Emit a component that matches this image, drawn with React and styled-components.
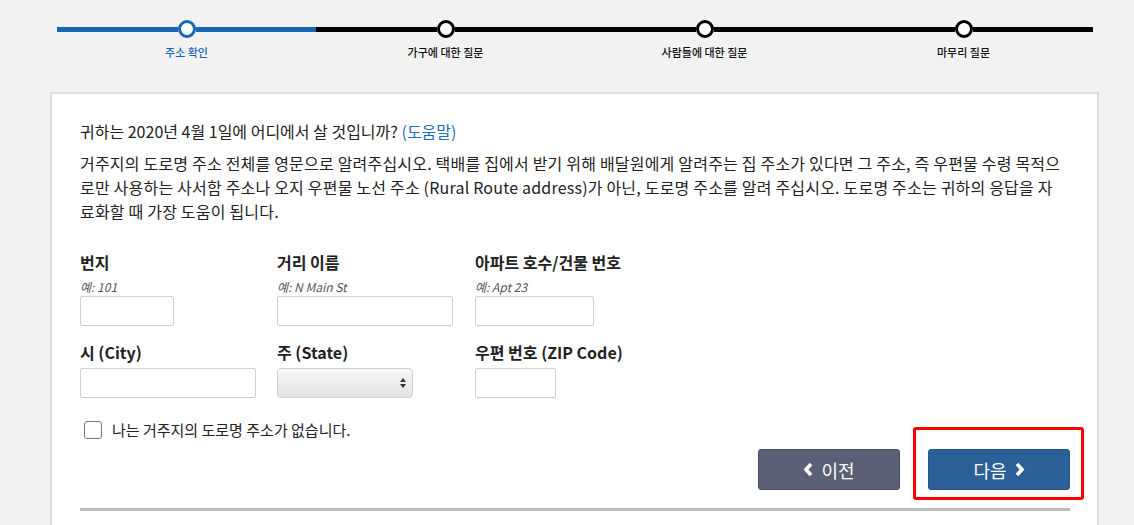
import styled, { createGlobalStyle } from 'styled-components';

const steps = ['주소 확인', '가구에 대한 질문', '사람들에 대한 질문', '마무리 질문'];

function Chevron({ dir }) {
    const points = dir === 'left' ? '8,2 3,7.5 8,13' : '3,2 8,7.5 3,13';
    return (
        <svg width="11" height="15" viewBox="0 0 11 15">
            <polyline points={points} fill="none" stroke="#fff" strokeWidth="3.6" strokeLinejoin="miter" />
        </svg>
    );
}

function App() {
    return (
        <Page>
            <GlobalStyle />
            <Stepper>
                {steps.map((label, i) => (
                    <Step key={label}>
                        <Track>
                            <Segment $active={i === 0} />
                            <Dot $active={i === 0} />
                            <Segment $active={i === 0} />
                        </Track>
                        <StepLabel $active={i === 0}>{label}</StepLabel>
                    </Step>
                ))}
            </Stepper>

            <Card>
                <Question>
                    귀하는 2020년 4월 1일에 어디에서 살 것입니까? <HelpLink>(도움말)</HelpLink>
                </Question>
                <Description>
                    거주지의 도로명 주소 전체를 영문으로 알려주십시오. 택배를 집에서 받기 위해 배달원에게 알려주는 집 주소가 있다면 그 주소, 즉 우편물 수령 목적으<br />
                    로만 사용하는 사서함 주소나 오지 우편물 노선 주소 (Rural Route address)가 아닌, 도로명 주소를 알려 주십시오. 도로명 주소는 귀하의 응답을 자<br />
                    료화할 때 가장 도움이 됩니다.
                </Description>

                <FieldGrid>
                    <Field>
                        <Label>번지</Label>
                        <Hint>예: 101</Hint>
                        <Input $w={94} />
                    </Field>
                    <Field>
                        <Label>거리 이름</Label>
                        <Hint>예: N Main St</Hint>
                        <Input $w={176} />
                    </Field>
                    <Field>
                        <Label>아파트 호수/건물 번호</Label>
                        <Hint>예: Apt 23</Hint>
                        <Input $w={119} />
                    </Field>

                    <Field>
                        <Label>시 (City)</Label>
                        <Input $w={176} />
                    </Field>
                    <Field>
                        <Label>주 (State)</Label>
                        <SelectBox>
                            <svg width="6" height="10" viewBox="0 0 6 10">
                                <path d="M3 0 L6 4 L0 4 Z M3 10 L6 6 L0 6 Z" fill="#333" />
                            </svg>
                        </SelectBox>
                    </Field>
                    <Field>
                        <Label>우편 번호 (ZIP Code)</Label>
                        <Input $w={81} />
                    </Field>
                </FieldGrid>

                <CheckRow>
                    <CheckBox />
                    <CheckText>나는 거주지의 도로명 주소가 없습니다.</CheckText>
                </CheckRow>

                <ButtonRow>
                    <NavButton $variant="prev">
                        <Chevron dir="left" /> 이전
                    </NavButton>
                    <Highlight>
                        <NavButton $variant="next">
                            다음 <Chevron dir="right" />
                        </NavButton>
                        <RedBox />
                    </Highlight>
                </ButtonRow>

                <Divider />
            </Card>
        </Page>
    );
}

const GlobalStyle = createGlobalStyle`
body {
    margin: 0;
    background: #f2f2f2;
    font-family: "Noto Sans CJK KR", "Noto Sans", sans-serif;
    color: #222;
}
`
const Page = styled.div`
width: 1134px;
height: 525px;
overflow: hidden;
`
const Stepper = styled.div`
display: grid;
grid-template-columns: repeat(4, 259px);
margin-left: 57px;
padding-top: 20px;
`
const Step = styled.div`
display: flex;
flex-direction: column;
align-items: center;
`
const Track = styled.div`
display: flex;
align-items: center;
width: 100%;
height: 18px;
`
const Segment = styled.div`
flex: 1;
height: 5px;
background: ${p => p.$active ? '#1667b3' : '#000'};
`
const Dot = styled.div`
width: 12px;
height: 12px;
border-radius: 50%;
background: #fff;
border: 3px solid ${p => p.$active ? '#1667b3' : '#000'};
`
const StepLabel = styled.div`
margin-top: 6px;
font-size: 11px;
line-height: 16px;
font-weight: 500;
color: ${p => p.$active ? '#1667b3' : '#111'};
`
const Card = styled.div`
margin: 32px 35px 0 50px;
background: #fff;
border: 2px solid #dcdcdc;
padding: 25px 27px 40px 28px;
`
const Question = styled.div`
font-size: 16px;
line-height: 24px;
color: #222;
`
const HelpLink = styled.a`
color: #1b6fbf;
`
const Description = styled.p`
margin: 8px 0 0;
font-size: 16px;
line-height: 24px;
letter-spacing: 0.2px;
white-space: nowrap;
color: #222;
`
const FieldGrid = styled.div`
display: grid;
grid-template-columns: 197px 198px auto;
margin-top: 29px;
row-gap: 16px;
`
const Field = styled.div`
display: flex;
flex-direction: column;
align-items: flex-start;
`
const Label = styled.div`
font-size: 16px;
font-weight: 700;
line-height: 20px;
margin-bottom: 6px;
color: #222;
`
const Hint = styled.div`
font-size: 12px;
font-style: italic;
line-height: 18px;
color: #555;
`
const Input = styled.input`
box-sizing: border-box;
width: ${p => p.$w}px;
height: 30px;
border: 1px solid #cfcfcf;
border-radius: 2px;
background: #fff;
`
const SelectBox = styled.div`
box-sizing: border-box;
width: 136px;
height: 30px;
border: 1px solid #cfcfcf;
border-radius: 4px;
background: linear-gradient(#f8f8f8, #e2e2e2);
display: flex;
align-items: center;
justify-content: flex-end;
padding-right: 6px;
`
const CheckRow = styled.div`
display: flex;
align-items: center;
gap: 10px;
margin: 22px 0 0 4px;
`
const CheckBox = styled.div`
width: 16px;
height: 16px;
border: 1px solid #777;
border-radius: 3px;
background: #fff;
`
const CheckText = styled.span`
font-size: 15px;
line-height: 20px;
color: #222;
`
const ButtonRow = styled.div`
display: flex;
justify-content: flex-end;
gap: 28px;
margin-top: 9px;
`
const NavButton = styled.button`
box-sizing: border-box;
width: 142px;
height: 41px;
display: flex;
align-items: center;
justify-content: center;
gap: 7px;
border-radius: 3px;
font-family: "Noto Sans CJK KR", sans-serif;
font-size: 18px;
color: #fff;
background: ${p => p.$variant === 'prev' ? '#5b6076' : '#2a5f97'};
border: 1px solid ${p => p.$variant === 'prev' ? '#4a4e60' : '#24548a'};
`
const Highlight = styled.div`
position: relative;
`
const RedBox = styled.div`
position: absolute;
top: -22px;
left: -15px;
right: -14px;
bottom: -10px;
border: 3px solid #ff0000;
border-radius: 3px;
pointer-events: none;
`
const Divider = styled.div`
margin-top: 18px;
height: 3px;
background: #bdbdbd;
`

export default App;
